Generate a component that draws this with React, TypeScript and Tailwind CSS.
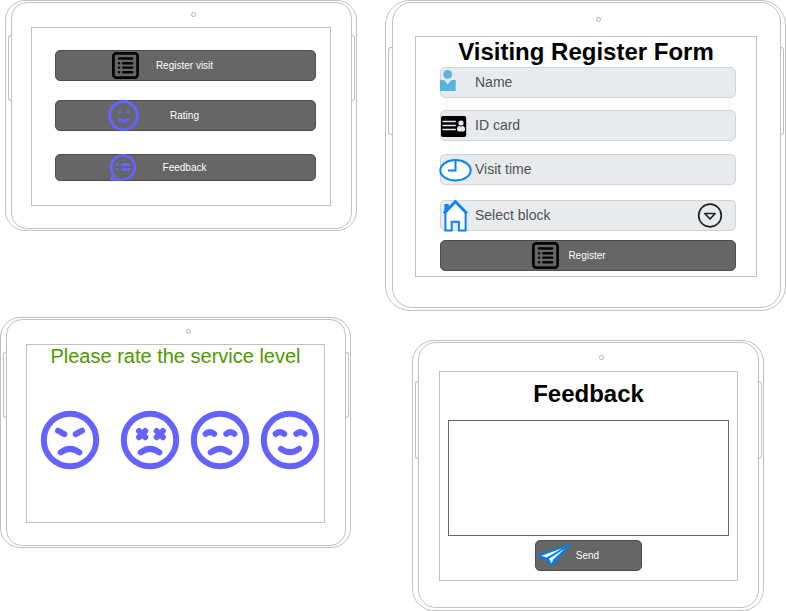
import type { ReactNode } from "react";

type TabletProps = {
  className: string;
  frame: string;
  body: string;
  header: string;
  side: string;
  children: ReactNode;
};

function Tablet({ className, frame, body, header, side, children }: TabletProps) {
  return (
    <section className={`relative border border-[#c0c0c0] pt-px pr-1 ${frame} ${className}`}>
      <span className={`absolute left-[2px] w-[4px] rounded-l-[3px] border border-r-0 border-[#c0c0c0] ${side}`} />
      <span className={`absolute right-px w-[4px] rounded-r-[3px] border border-l-0 border-[#c0c0c0] ${side}`} />
      <div className={`border border-[#c0c0c0] ${body}`}>
        <div className={`flex items-center justify-center pl-[25px] ${header}`}>
          <span className="size-[5px] rounded-full border border-[#b4b4b4]" />
        </div>
        <div className="border border-[#c0c0c0]">{children}</div>
      </div>
    </section>
  );
}

const smallTablet = {
  frame: "rounded-[20px] pb-px pl-[5px]",
  body: "rounded-[16px] pr-5 pb-[22px] pl-[19px]",
  header: "h-6 pb-[2px]",
  side: "top-[34px] h-[66px]",
};

const formTablet = {
  frame: "rounded-[25px] pb-[2px] pl-[6px]",
  body: "rounded-[20px] pr-[23px] pb-[30px] pl-[22px]",
  header: "h-[33px]",
  side: "top-[46px] h-[88px]",
};

const feedbackTablet = {
  frame: "rounded-[22px] pb-[2px] pl-[5px]",
  body: "rounded-[18px] pr-5 pb-[26px] pl-5",
  header: "h-7",
  side: "top-[40px] h-[78px]",
};

function ActionButton({ label, icon, className }: { label: string; icon: ReactNode; className: string }) {
  return (
    <button
      type="button"
      className={`grid grid-cols-1 items-center rounded-[5px] border border-[#4d4d4d] bg-[#666666] text-[10px] leading-3 text-white ${className}`}
    >
      <span className="col-start-1 row-start-1 pr-[2px]">{label}</span>
      <span className="col-start-1 row-start-1">{icon}</span>
    </button>
  );
}

function ListIcon({ className }: { className: string }) {
  return (
    <svg viewBox="0 0 27 27" className={`block size-[27px] ${className}`} fill="none" stroke="#050505" strokeWidth="2.4" strokeLinecap="round" aria-hidden="true">
      <rect x="1.4" y="1.4" width="24.2" height="24.2" rx="2.8" strokeWidth="2.7" />
      <path d="M6.8 6.5H20.2M11.2 11.2H20.2M11.2 15.6H20.2M11.2 20.2H20.2M7 11.2h.1M7 15.6h.1M7 20.2h.1" />
    </svg>
  );
}

function SmileIcon() {
  return (
    <svg viewBox="0 0 29 29" className="ml-[53px] block size-[29px] overflow-visible" fill="none" stroke="#6563ff" strokeWidth="3.1" strokeLinecap="round" aria-hidden="true">
      <circle cx="14.5" cy="14.5" r="13.9" />
      <path d="M10 10.8h.1M19 10.8h.1M9.8 18.4Q14.5 21.8 19.2 18.4" />
    </svg>
  );
}

function CommentListIcon() {
  return (
    <svg viewBox="0 0 25 25" className="ml-[54px] block size-[25px] overflow-visible" fill="none" stroke="#6563ff" strokeWidth="2.7" strokeLinecap="round" strokeLinejoin="round" aria-hidden="true">
      <path d="M12.5 24.3H1.2L4.3 20.6A12 12 0 1 1 12.5 24.3z" />
      <path d="M12 9.6H19.4M12 14.3H19.4M6.8 9.6h.1M6.8 14.3h.1" />
    </svg>
  );
}

function PlaneIcon() {
  return (
    <svg viewBox="1 1 36 29" className="block h-[29px] w-[36px] overflow-visible" aria-hidden="true">
      <path d="M36 3.6L0.5 15.8L11 19.4L16.8 26.4L20.6 22.4z" fill="#0080f0" />
      <path d="M6.3 15.8L27.5 8.2L11.6 17.5z" fill="#fff" />
      <path d="M30 8.6L14 18.8L16.8 23.2L18 19.8z" fill="#fff" />
    </svg>
  );
}

function FieldIcon({ children }: { children: ReactNode }) {
  return (
    <svg viewBox="0 0 32 31" className="pointer-events-none z-10 col-start-1 row-start-1 h-[31px] w-8 overflow-visible" aria-hidden="true">
      {children}
    </svg>
  );
}

const control =
  "col-start-1 row-start-1 h-[31px] w-full min-w-0 appearance-none rounded-[5px] border border-[#ced4da] bg-[#e7ebee] pb-[2px] pl-[34px] text-sm text-[#505050] placeholder:text-[#505050] placeholder:opacity-100";

function TextField({ label, icon, className }: { label: string; icon: ReactNode; className: string }) {
  return (
    <label className={`grid grid-cols-1 ${className}`}>
      <input type="text" aria-label={label} placeholder={label} className={control} />
      <FieldIcon>{icon}</FieldIcon>
    </label>
  );
}

const frown = "M20.7 42.4Q30 35.2 39.3 42.4";
const faces = [
  { name: "Angry", gap: "", d: `M18 20.7L24.3 24.2M42 20.7L35.7 24.2${frown}` },
  {
    name: "Very dissatisfied",
    gap: "ml-5",
    d: `M19 21L25.2 27.2M25.2 21L19 27.2M36.7 21L42.9 27.2M42.9 21L36.7 27.2${frown}`,
  },
  { name: "Dissatisfied", gap: "ml-[10px]", d: `M15.6 23.8Q19.8 20.4 24.2 23.8M36.3 23.8Q40.5 20.4 44.4 23.8${frown}` },
  { name: "Satisfied", gap: "ml-[10px]", d: "M15.6 23.8Q19.8 20.4 24.2 23.8M36.3 23.8Q40.5 20.4 44.4 23.8M21 38.8Q30 45.4 39 38.8" },
];

export default function App() {
  return (
    <main className="grid grid-cols-[385fr_401fr] items-start bg-white font-['Liberation_Sans',Arial,sans-serif] text-black">
      <div>
        <Tablet {...smallTablet} className="mr-7 ml-[5px]">
          <nav className="flex flex-col pt-[22px] pr-[14px] pb-6 pl-[23px]">
            <ActionButton label="Register visit" className="h-[31px]" icon={<ListIcon className="ml-14" />} />
            <ActionButton label="Rating" className="mt-[19px] h-[31px]" icon={<SmileIcon />} />
            <ActionButton label="Feedback" className="mt-[23px] h-[27px]" icon={<CommentListIcon />} />
          </nav>
        </Tablet>

        <Tablet {...smallTablet} className="mt-[86px] mr-[34px]">
          <h2 className="text-center text-xl leading-[22px] text-[#4d9900]">Please rate the service level</h2>
          <div className="mt-[43px] mb-[52px] flex pl-[13px]">
            {faces.map((face) => (
              <button key={face.name} type="button" aria-label={face.name} className={`size-[60px] shrink-0 ${face.gap}`}>
                <svg viewBox="0 0 60 60" className="block size-full" fill="none" stroke="#6563ff" strokeWidth="6" strokeLinecap="round" aria-hidden="true">
                  <circle cx="30" cy="30" r="26.2" />
                  <path d={face.d} />
                </svg>
              </button>
            ))}
          </div>
        </Tablet>
      </div>

      <div>
        <Tablet {...formTablet} className="">
          <h1 className="text-center text-2xl leading-[30px] font-bold whitespace-nowrap">Visiting Register Form</h1>
          <form className="flex flex-col pr-5 pb-[5px] pl-6">
            <TextField
              label="Name"
              className=""
              icon={
                <g fill="#5ab4dc">
                  <circle cx="7.7" cy="7.4" r="4.4" />
                  <path d="M0 13H4L7.7 17.2L11.5 13H15.7V24H0z" />
                </g>
              }
            />
            <TextField
              label="ID card"
              className="mt-3"
              icon={
                <g>
                  <rect x="1" y="6" width="25.2" height="21" rx="2" fill="#000" />
                  <path d="M2.4 11.5H15.8M2.4 15.5H15.8M2.4 19.5H15.8" stroke="#e7ebee" strokeWidth="1.7" />
                  <circle cx="21" cy="13" r="2.6" fill="#e7ebee" />
                  <path d="M17 19.5Q16.8 16 19.6 16L21 16.8L22.4 16Q25.2 16 25.1 19.5Q25.1 21.4 23 21.4H19Q17 21.4 17 19.5z" fill="#e7ebee" />
                </g>
              }
            />
            <TextField
              label="Visit time"
              className="mt-[13px]"
              icon={
                <g stroke="#0a84f5" strokeWidth="2">
                  <ellipse cx="15.5" cy="16.3" rx="15.2" ry="10.2" fill="#fff" />
                  <path d="M15.5 6.5V16.6H8" fill="none" />
                </g>
              }
            />
            <label className="mt-[15px] grid grid-cols-1">
              <select aria-label="Select block" className={control}>
                <option>Select block</option>
              </select>
              <FieldIcon>
                <path d="M4.4 12V4H8.8V7.5z" fill="#0a84f5" />
                <path d="M5.4 12.5V30.6H11.7V21.8H18.9V30.6H25.6V12.5L15.4 2z" fill="#fff" stroke="#0a84f5" strokeWidth="2" />
                <path d="M3.8 13.4L15.4 1.4L27 13.4" fill="none" stroke="#0a84f5" strokeWidth="2.8" />
              </FieldIcon>
              <svg viewBox="0 0 26 26" className="pointer-events-none col-start-1 row-start-1 mr-[13px] size-[26px] self-center justify-self-end" fill="none" stroke="#1f2125" strokeWidth="1.7" aria-hidden="true">
                <circle cx="13" cy="12.5" r="11.3" />
                <path d="M7.8 10.5H18.2L13 16z" strokeLinejoin="round" />
              </svg>
            </label>
            <ActionButton label="Register" className="mt-[9px] h-[31px]" icon={<ListIcon className="ml-[91px]" />} />
          </form>
        </Tablet>

        <Tablet {...feedbackTablet} className="mt-[29px] mr-[22px] ml-[27px]">
          <form className="flex flex-col px-2 pt-[7px] pb-[9px]">
            <h2 className="text-center text-2xl leading-[30px] font-bold">Feedback</h2>
            <textarea aria-label="Feedback" className="mt-[11px] block h-[116px] w-full resize-none border border-[#666666] bg-white p-2 text-sm" />
            <ActionButton label="Send" className="mt-1 h-[31px] w-[107px] self-center" icon={<PlaneIcon />} />
          </form>
        </Tablet>
      </div>
    </main>
  );
}
